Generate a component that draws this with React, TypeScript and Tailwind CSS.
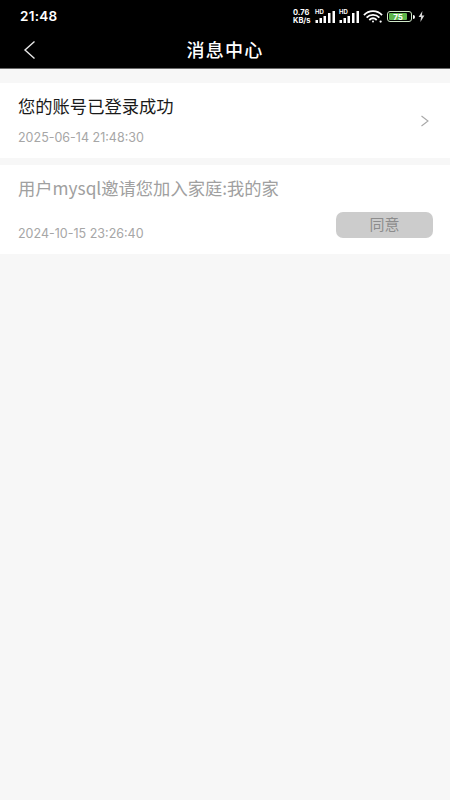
const cjk = "font-['Noto_Sans_CJK_SC','Noto_Sans',sans-serif]"

const Signal = () => (
  <div className="relative w-[21px] h-[14px]">
    <span className="absolute left-0 top-[-2px] text-[6px] leading-[7px] font-bold text-white font-['Inter',sans-serif]">HD</span>
    <svg width="21" height="14" viewBox="0 0 21 14" className="absolute left-0 top-0" fill="#fff">
      <rect x="0.5" y="10" width="2.5" height="3" />
      <rect x="4.5" y="8" width="2.5" height="5" />
      <rect x="8.5" y="6" width="2.5" height="7" />
      <rect x="13" y="3" width="2.5" height="10" />
      <rect x="17.5" y="1" width="2.5" height="12" />
    </svg>
  </div>
)

const StatusBar = () => (
  <div className="h-[32px] flex items-center pl-[20px] pr-[25px] text-white">
    <span className="text-[13.5px] font-semibold tracking-[0.3px] font-['Inter',sans-serif]">21:48</span>
    <div className="ml-auto flex items-center pt-px">
      <div className="text-[7.5px] leading-[8px] font-bold font-['Inter',sans-serif] w-[22px]">
        <div>0.76</div>
        <div>KB/s</div>
      </div>
      <Signal />
      <div className="w-[3px]" />
      <Signal />
      <svg width="20" height="15" viewBox="0 0 21 15" fill="none" stroke="#fff" strokeWidth="1.9" className="ml-[3px]">
        <path d="M1 6 C6 0.5 15 0.5 20 6" />
        <path d="M3.8 8.6 C7.5 4.8 13.5 4.8 17.2 8.6" />
        <path d="M6.6 11.2 C9 8.9 12 8.9 14.4 11.2" />
        <circle cx="10.5" cy="12.8" r="1" fill="#fff" stroke="none" />
        <circle cx="18.5" cy="12.8" r="1.2" fill="#fff" stroke="none" />
      </svg>
      <div className="flex items-center ml-[4px]">
        <div className="w-[25px] h-[11px] rounded-[3px] border border-[#cfe8c8] p-px">
          <div className="w-[18px] h-full bg-[#5cb54a] rounded-[1px] flex items-center justify-center">
            <span className="text-[8px] leading-none font-bold text-white font-['Inter',sans-serif]">75</span>
          </div>
        </div>
        <div className="w-[2px] h-[4px] bg-white ml-px rounded-r-sm" />
      </div>
      <svg width="7" height="11" viewBox="0 0 7 11" fill="#d8d8d8" className="ml-[3px]">
        <path d="M4.4 0 L0.6 6 H3 L2.4 11 L6.4 4.6 H3.9 Z" />
      </svg>
    </div>
  </div>
)

export default function App() {
  return (
    <div className={`w-[450px] h-[800px] bg-[#f7f7f7] overflow-hidden ${cjk}`}>
      <div className="bg-black h-[69px] border-b border-[#6a6a6a]">
        <StatusBar />
        <div className="relative h-[36px] flex items-center justify-center">
          <svg width="14" height="20" viewBox="0 0 14 20" fill="none" stroke="#e8e8e8" strokeWidth="1.4" className="absolute left-[23px] top-[8px]">
            <path d="M11.5 1.5 L2 10 L11.5 18.5" />
          </svg>
          <span className="text-white text-[18px] leading-[34px] pb-[2px] font-medium tracking-[1.2px]">消息中心</span>
        </div>
      </div>

      <div className="mt-[14px] bg-white h-[75px] relative px-[18px] pt-[12px]">
        <div className="text-[17.3px] leading-[22px] text-[#1a1a1a]">您的账号已登录成功</div>
        <div className="mt-[12px] text-[12.5px] leading-[18px] text-[#a6a6a6] font-['Inter',sans-serif]">2025-06-14 21:48:30</div>
        <svg width="10" height="14" viewBox="0 0 10 14" fill="none" stroke="#a8a8a8" strokeWidth="1.1" className="absolute right-[20px] top-[31px]">
          <path d="M1.5 2 L8 7 L1.5 12" />
        </svg>
      </div>

      <div className="mt-[7px] bg-white h-[89px] relative px-[18px] pt-[12px]">
        <div className="text-[17.3px] leading-[22px] text-[#a0a0a0]">用户mysql邀请您加入家庭:我的家</div>
        <div className="mt-[26px] text-[12.5px] leading-[18px] text-[#a6a6a6] font-['Inter',sans-serif]">2024-10-15 23:26:40</div>
        <button className="absolute right-[17px] top-[47px] w-[97px] h-[26px] rounded-[7px] bg-[#cccccc] text-[15px] leading-[24px] pb-[2px] text-[#8c8c8c]">同意</button>
      </div>
    </div>
  )
}
